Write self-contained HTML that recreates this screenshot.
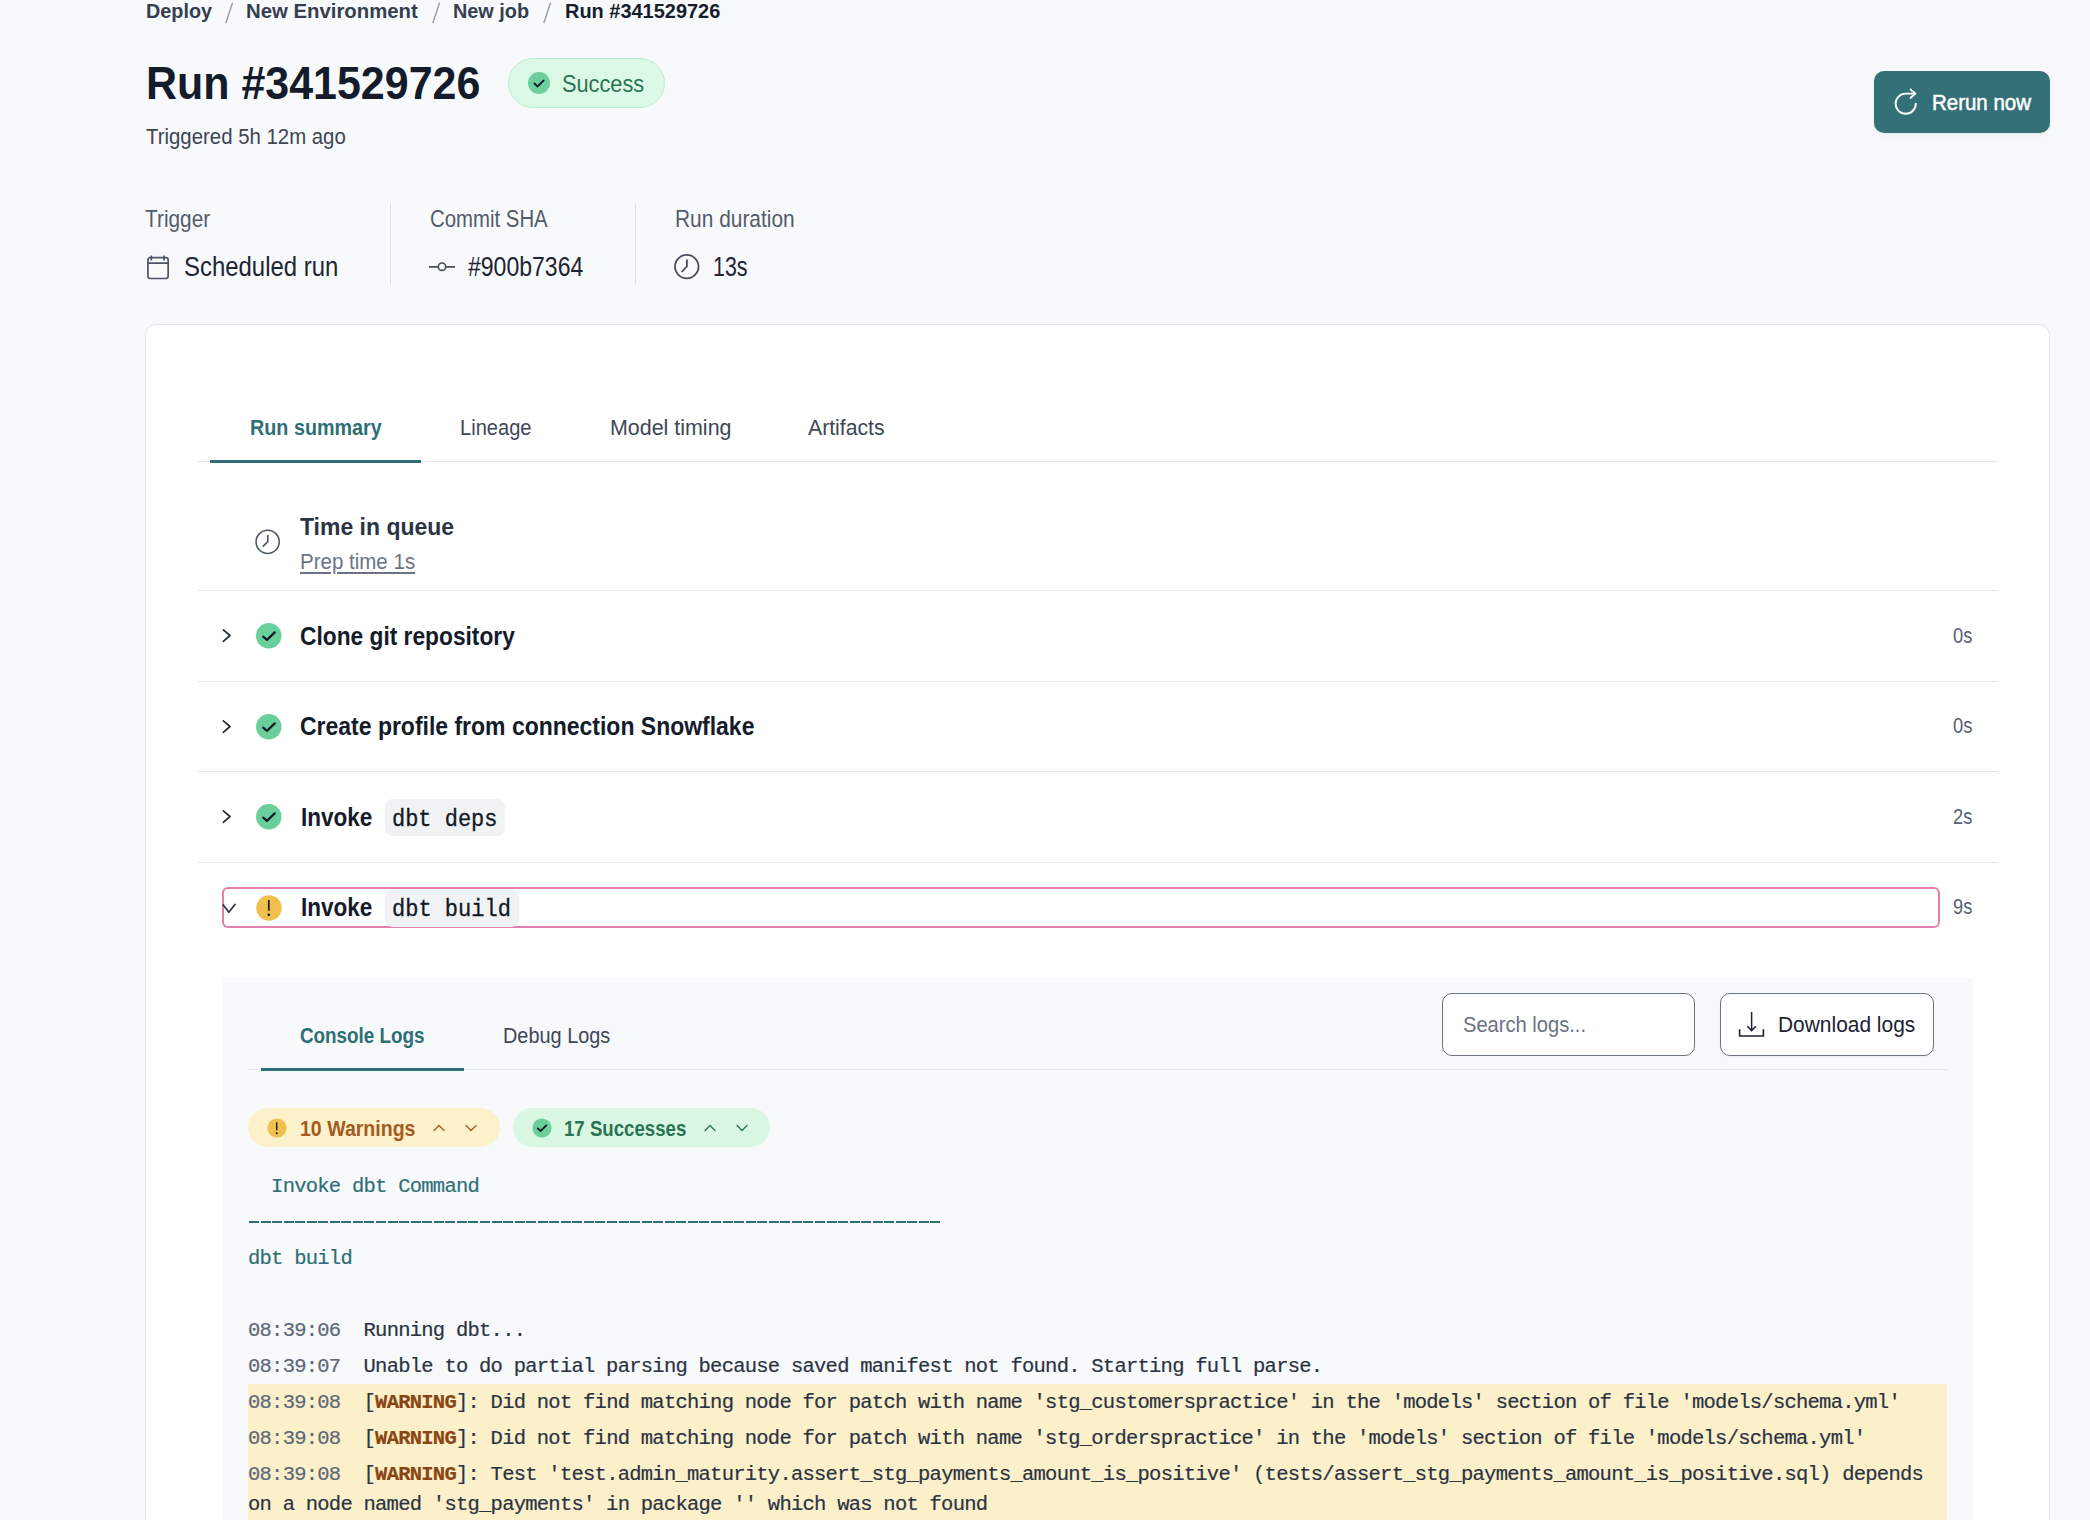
<!DOCTYPE html>
<html><head><meta charset="utf-8"><style>
html,body{margin:0;padding:0;}
body{width:2090px;height:1520px;overflow:hidden;position:relative;background:#f8f9fb;font-family:'Liberation Sans', sans-serif;}
.t{position:absolute;white-space:pre;}
.m{position:absolute;white-space:pre;-webkit-text-stroke-width:0.2px;font-family:'Liberation Mono', monospace;font-size:20.5px;line-height:20.5px;letter-spacing:-0.750px;}
.m b{font-weight:700;}
svg{overflow:visible}
</style></head><body>
<div class="t" style="left:145.7px;top:1.2px;font-size:20.79px;line-height:20.79px;letter-spacing:0.00px;font-family:'Liberation Sans', sans-serif;font-weight:700;color:#343e4f;transform:scaleX(0.9524);transform-origin:0 0;">Deploy</div>
<div class="t" style="left:246.2px;top:1.2px;font-size:20.79px;line-height:20.79px;letter-spacing:0.00px;font-family:'Liberation Sans', sans-serif;font-weight:700;color:#343e4f;transform:scaleX(0.9789);transform-origin:0 0;">New Environment</div>
<div class="t" style="left:452.9px;top:1.2px;font-size:20.79px;line-height:20.79px;letter-spacing:0.00px;font-family:'Liberation Sans', sans-serif;font-weight:700;color:#343e4f;transform:scaleX(0.9548);transform-origin:0 0;">New job</div>
<div class="t" style="left:564.7px;top:1.2px;font-size:20.79px;line-height:20.79px;letter-spacing:0.00px;font-family:'Liberation Sans', sans-serif;font-weight:700;color:#161d2c;transform:scaleX(0.9599);transform-origin:0 0;">Run #341529726</div>
<svg style="position:absolute;left:225.3px;top:2px;" width="10" height="22" viewBox="0 0 10 22"><path d="M7.4 1.3 L1 20.5" stroke="#9aa2ad" stroke-width="1.5" stroke-linecap="round"/></svg>
<svg style="position:absolute;left:431.5px;top:2px;" width="10" height="22" viewBox="0 0 10 22"><path d="M7.4 1.3 L1 20.5" stroke="#9aa2ad" stroke-width="1.5" stroke-linecap="round"/></svg>
<svg style="position:absolute;left:542.5px;top:2px;" width="10" height="22" viewBox="0 0 10 22"><path d="M7.4 1.3 L1 20.5" stroke="#9aa2ad" stroke-width="1.5" stroke-linecap="round"/></svg>
<div class="t" style="left:145.8px;top:59.8px;font-size:46.95px;line-height:46.95px;letter-spacing:0.00px;font-family:'Liberation Sans', sans-serif;font-weight:700;color:#141b2a;transform:scaleX(0.9151);transform-origin:0 0;">Run #341529726</div>
<div style="position:absolute;left:508px;top:58px;width:157px;height:50px;box-sizing:border-box;border:1.5px solid #b9efcf;background:#dcf8e6;border-radius:25px"></div>
<svg style="position:absolute;left:528px;top:72px;" width="22" height="22" viewBox="0 0 22 22"><circle cx="11" cy="11" r="11" fill="#6ccf9c"/><path d="M6.5 11.5 L9.6 14.4 L15.5 8.6" stroke="#161a2e" stroke-width="2" fill="none" stroke-linecap="round" stroke-linejoin="round"/></svg>
<div class="t" style="left:561.6px;top:71.8px;font-size:24.71px;line-height:24.71px;letter-spacing:0.00px;font-family:'Liberation Sans', sans-serif;font-weight:400;color:#2a7353;transform:scaleX(0.8801);transform-origin:0 0;">Success</div>
<div class="t" style="left:145.5px;top:125.8px;font-size:21.22px;line-height:21.22px;letter-spacing:0.00px;font-family:'Liberation Sans', sans-serif;font-weight:400;color:#3b4454;transform:scaleX(0.9605);transform-origin:0 0;">Triggered 5h 12m ago</div>
<div style="position:absolute;left:1874px;top:71px;width:176px;height:62px;background:#347077;border-radius:10px;box-shadow:0 2px 4px rgba(0,0,0,0.06)"></div>
<svg style="position:absolute;left:1893px;top:86px;" width="28" height="30" viewBox="0 0 28 30"><path d="M22.8 17.6 A10.1 10.1 0 1 1 12.7 7.6 H22.3" stroke="#fff" stroke-width="1.9" fill="none" stroke-linecap="round"/><path d="M17.6 3.5 L22.4 7.6 L17.6 11.8" stroke="#fff" stroke-width="1.9" fill="none" stroke-linecap="round" stroke-linejoin="round"/></svg>
<div class="t" style="left:1932.4px;top:91.8px;font-size:21.22px;line-height:21.22px;letter-spacing:0.00px;font-family:'Liberation Sans', sans-serif;font-weight:400;color:#ffffff;transform:scaleX(0.9639);transform-origin:0 0;-webkit-text-stroke:0.5px #ffffff">Rerun now</div>
<div class="t" style="left:145.0px;top:208.1px;font-size:23.26px;line-height:23.26px;letter-spacing:0.00px;font-family:'Liberation Sans', sans-serif;font-weight:400;color:#535c6a;transform:scaleX(0.8957);transform-origin:0 0;">Trigger</div>
<div class="t" style="left:429.7px;top:208.1px;font-size:23.26px;line-height:23.26px;letter-spacing:0.00px;font-family:'Liberation Sans', sans-serif;font-weight:400;color:#535c6a;transform:scaleX(0.8759);transform-origin:0 0;">Commit SHA</div>
<div class="t" style="left:674.8px;top:208.1px;font-size:23.26px;line-height:23.26px;letter-spacing:0.00px;font-family:'Liberation Sans', sans-serif;font-weight:400;color:#535c6a;transform:scaleX(0.8988);transform-origin:0 0;">Run duration</div>
<div style="position:absolute;left:389.5px;top:203px;width:1.5px;height:82px;background:#dfe2e6"></div>
<div style="position:absolute;left:634.5px;top:203px;width:1.5px;height:82px;background:#dfe2e6"></div>
<svg style="position:absolute;left:146px;top:255px;" width="24" height="25" viewBox="0 0 24 25"><rect x="1.95" y="2.7" width="20.2" height="20.8" rx="2.2" stroke="#4a5464" stroke-width="1.7" fill="none"/><path d="M1.95 8.2 H22.15 M5.3 0.6 V5.4 M18.1 0.6 V5.4" stroke="#4a5464" stroke-width="1.7"/></svg>
<div class="t" style="left:183.5px;top:253.8px;font-size:26.74px;line-height:26.74px;letter-spacing:0.00px;font-family:'Liberation Sans', sans-serif;font-weight:400;color:#1d2433;transform:scaleX(0.8949);transform-origin:0 0;">Scheduled run</div>
<svg style="position:absolute;left:428px;top:258px;" width="28" height="18" viewBox="0 0 28 18"><path d="M1 8.9 H10.3 M17.7 8.9 H27" stroke="#434d5c" stroke-width="1.8"/><circle cx="14" cy="8.7" r="3.7" stroke="#434d5c" stroke-width="1.6" fill="none"/></svg>
<div class="t" style="left:467.5px;top:253.8px;font-size:26.74px;line-height:26.74px;letter-spacing:0.00px;font-family:'Liberation Sans', sans-serif;font-weight:400;color:#1d2433;transform:scaleX(0.8616);transform-origin:0 0;">#900b7364</div>
<svg style="position:absolute;left:673px;top:254px;" width="27" height="27" viewBox="0 0 27 27"><circle cx="13.75" cy="12.6" r="11.75" stroke="#434d5c" stroke-width="1.8" fill="none"/><path d="M13.9 5.6 V12.4 L8.7 18" stroke="#434d5c" stroke-width="1.8" fill="none"/></svg>
<div class="t" style="left:713.3px;top:253.8px;font-size:26.74px;line-height:26.74px;letter-spacing:0.00px;font-family:'Liberation Sans', sans-serif;font-weight:400;color:#1d2433;transform:scaleX(0.8005);transform-origin:0 0;">13s</div>
<div style="position:absolute;left:145px;top:324px;width:1905px;height:1300px;box-sizing:border-box;background:#fff;border:1px solid #e2e4e8;border-radius:11px"></div>
<div style="position:absolute;left:197px;top:460.5px;width:1801px;height:1.5px;background:#e5e7eb"></div>
<div style="position:absolute;left:210px;top:460px;width:211px;height:3px;background:#2e6f76"></div>
<div class="t" style="left:249.6px;top:417.8px;font-size:21.37px;line-height:21.37px;letter-spacing:0.00px;font-family:'Liberation Sans', sans-serif;font-weight:700;color:#2e6f76;transform:scaleX(0.9250);transform-origin:0 0;">Run summary</div>
<div class="t" style="left:459.8px;top:417.4px;font-size:21.80px;line-height:21.80px;letter-spacing:0.00px;font-family:'Liberation Sans', sans-serif;font-weight:400;color:#3d4756;transform:scaleX(0.9214);transform-origin:0 0;">Lineage</div>
<div class="t" style="left:609.5px;top:417.4px;font-size:21.80px;line-height:21.80px;letter-spacing:0.00px;font-family:'Liberation Sans', sans-serif;font-weight:400;color:#3d4756;transform:scaleX(0.9830);transform-origin:0 0;">Model timing</div>
<div class="t" style="left:808.0px;top:417.4px;font-size:21.80px;line-height:21.80px;letter-spacing:0.00px;font-family:'Liberation Sans', sans-serif;font-weight:400;color:#3d4756;transform:scaleX(0.9733);transform-origin:0 0;">Artifacts</div>
<svg style="position:absolute;left:254px;top:528px;" width="27" height="27" viewBox="0 0 27 27"><circle cx="13.65" cy="13.85" r="11.6" stroke="#4d5766" stroke-width="1.6" fill="none"/><path d="M13.8 7 V13.6 L8.8 18.6" stroke="#4d5766" stroke-width="1.6" fill="none"/></svg>
<div class="t" style="left:300.0px;top:515.0px;font-size:24.71px;line-height:24.71px;letter-spacing:0.00px;font-family:'Liberation Sans', sans-serif;font-weight:700;color:#2b3444;transform:scaleX(0.9300);transform-origin:0 0;">Time in queue</div>
<div class="t" style="left:300.0px;top:551.1px;font-size:22.09px;line-height:22.09px;letter-spacing:0.00px;font-family:'Liberation Sans', sans-serif;font-weight:400;color:#6b7485;transform:scaleX(0.9291);transform-origin:0 0;text-decoration:underline;text-underline-offset:3px;text-decoration-thickness:1.5px">Prep time 1s</div>
<div style="position:absolute;left:197px;top:590px;width:1801px;height:1px;background:#e3e5ea"></div>
<div style="position:absolute;left:197px;top:681px;width:1801px;height:1px;background:#e3e5ea"></div>
<div style="position:absolute;left:197px;top:771px;width:1801px;height:1px;background:#e3e5ea"></div>
<div style="position:absolute;left:197px;top:862px;width:1801px;height:1px;background:#e3e5ea"></div>
<svg style="position:absolute;left:221px;top:628px;" width="12" height="16" viewBox="0 0 12 16"><path d="M2.3 1.9 L9.0 7.5 L2.3 13.3" stroke="#222a38" stroke-width="1.7" fill="none" stroke-linecap="round" stroke-linejoin="round"/></svg>
<svg style="position:absolute;left:256.05px;top:623.25px;" width="25.5" height="25.5" viewBox="0 0 25.5 25.5"><circle cx="12.75" cy="12.75" r="12.75" fill="#6acf9b"/><path d="M7.15 13.65 L10.95 16.85 L18.75 9.35" stroke="#131a28" stroke-width="2.2" fill="none" stroke-linecap="round" stroke-linejoin="round"/></svg>
<div class="t" style="left:300.2px;top:622.9px;font-size:26.16px;line-height:26.16px;letter-spacing:0.00px;font-family:'Liberation Sans', sans-serif;font-weight:700;color:#141b2a;transform:scaleX(0.8695);transform-origin:0 0;">Clone git repository</div>
<div class="t" style="left:1952.8px;top:625.7px;font-size:21.51px;line-height:21.51px;letter-spacing:0.00px;font-family:'Liberation Sans', sans-serif;font-weight:400;color:#586274;transform:scaleX(0.8502);transform-origin:0 0;">0s</div>
<svg style="position:absolute;left:221px;top:719px;" width="12" height="16" viewBox="0 0 12 16"><path d="M2.3 1.9 L9.0 7.5 L2.3 13.3" stroke="#222a38" stroke-width="1.7" fill="none" stroke-linecap="round" stroke-linejoin="round"/></svg>
<svg style="position:absolute;left:256.05px;top:714.25px;" width="25.5" height="25.5" viewBox="0 0 25.5 25.5"><circle cx="12.75" cy="12.75" r="12.75" fill="#6acf9b"/><path d="M7.15 13.65 L10.95 16.85 L18.75 9.35" stroke="#131a28" stroke-width="2.2" fill="none" stroke-linecap="round" stroke-linejoin="round"/></svg>
<div class="t" style="left:300.3px;top:713.6px;font-size:25.44px;line-height:25.44px;letter-spacing:0.00px;font-family:'Liberation Sans', sans-serif;font-weight:700;color:#141b2a;transform:scaleX(0.9031);transform-origin:0 0;">Create profile from connection Snowflake</div>
<div class="t" style="left:1952.8px;top:716.4px;font-size:21.51px;line-height:21.51px;letter-spacing:0.00px;font-family:'Liberation Sans', sans-serif;font-weight:400;color:#586274;transform:scaleX(0.8502);transform-origin:0 0;">0s</div>
<svg style="position:absolute;left:221px;top:809px;" width="12" height="16" viewBox="0 0 12 16"><path d="M2.3 1.9 L9.0 7.5 L2.3 13.3" stroke="#222a38" stroke-width="1.7" fill="none" stroke-linecap="round" stroke-linejoin="round"/></svg>
<svg style="position:absolute;left:256.05px;top:804.25px;" width="25.5" height="25.5" viewBox="0 0 25.5 25.5"><circle cx="12.75" cy="12.75" r="12.75" fill="#6acf9b"/><path d="M7.15 13.65 L10.95 16.85 L18.75 9.35" stroke="#131a28" stroke-width="2.2" fill="none" stroke-linecap="round" stroke-linejoin="round"/></svg>
<div class="t" style="left:300.8px;top:805.0px;font-size:25.00px;line-height:25.00px;letter-spacing:0.00px;font-family:'Liberation Sans', sans-serif;font-weight:700;color:#141b2a;transform:scaleX(0.9015);transform-origin:0 0;">Invoke</div>
<div style="position:absolute;left:385px;top:799px;width:120px;height:37px;background:#f1f2f4;border-radius:8px"></div>
<div class="t" style="left:392.0px;top:807.6px;font-size:24.29px;line-height:24.29px;letter-spacing:0.00px;font-family:'Liberation Mono', monospace;font-weight:400;color:#111826;transform:scaleX(0.9049);transform-origin:0 0;-webkit-text-stroke:0.3px #111826">dbt deps</div>
<div class="t" style="left:1952.8px;top:806.7px;font-size:21.51px;line-height:21.51px;letter-spacing:0.00px;font-family:'Liberation Sans', sans-serif;font-weight:400;color:#586274;transform:scaleX(0.8502);transform-origin:0 0;">2s</div>
<div style="position:absolute;left:222px;top:887px;width:1718px;height:41px;box-sizing:border-box;border:2.5px solid #e47eab;border-radius:6px"></div>
<svg style="position:absolute;left:221px;top:901.5px;" width="16" height="14" viewBox="0 0 16 14"><path d="M2.3 2.9 L7.8 10.3 L14.1 2.3" stroke="#2a3140" stroke-width="1.7" fill="none" stroke-linecap="round" stroke-linejoin="round"/></svg>
<svg style="position:absolute;left:256px;top:895px;" width="26" height="26" viewBox="0 0 26 26"><circle cx="13" cy="13" r="12.75" fill="#f0bf4c"/><path d="M12.8 5 V15.7" stroke="#161a26" stroke-width="1.7"/><circle cx="12.8" cy="19.8" r="1.35" fill="#161a26"/></svg>
<div class="t" style="left:300.8px;top:895.0px;font-size:25.00px;line-height:25.00px;letter-spacing:0.00px;font-family:'Liberation Sans', sans-serif;font-weight:700;color:#141b2a;transform:scaleX(0.9015);transform-origin:0 0;">Invoke</div>
<div style="position:absolute;left:385px;top:890px;width:134px;height:37px;background:#f1f2f4;border-radius:8px"></div>
<div class="t" style="left:392.0px;top:897.6px;font-size:24.29px;line-height:24.29px;letter-spacing:0.00px;font-family:'Liberation Mono', monospace;font-weight:400;color:#111826;transform:scaleX(0.9070);transform-origin:0 0;-webkit-text-stroke:0.3px #111826">dbt build</div>
<div class="t" style="left:1952.8px;top:897.0px;font-size:21.51px;line-height:21.51px;letter-spacing:0.00px;font-family:'Liberation Sans', sans-serif;font-weight:400;color:#586274;transform:scaleX(0.8502);transform-origin:0 0;">9s</div>
<div style="position:absolute;left:223px;top:978px;width:1750px;height:700px;background:#f8f9fb"></div>
<div style="position:absolute;left:248px;top:1068.5px;width:1699px;height:1.5px;background:#e3e6ea"></div>
<div style="position:absolute;left:261px;top:1067.5px;width:203px;height:3px;background:#2e6f76"></div>
<div class="t" style="left:300.3px;top:1025.2px;font-size:22.24px;line-height:22.24px;letter-spacing:0.00px;font-family:'Liberation Sans', sans-serif;font-weight:700;color:#2e6f76;transform:scaleX(0.8474);transform-origin:0 0;">Console Logs</div>
<div class="t" style="left:503.2px;top:1025.2px;font-size:22.24px;line-height:22.24px;letter-spacing:0.00px;font-family:'Liberation Sans', sans-serif;font-weight:400;color:#3d4756;transform:scaleX(0.8947);transform-origin:0 0;">Debug Logs</div>
<div style="position:absolute;left:1442px;top:993px;width:253px;height:63px;box-sizing:border-box;background:#fff;border:1.5px solid #6b7280;border-radius:10px"></div>
<div class="t" style="left:1462.7px;top:1013.6px;font-size:22.24px;line-height:22.24px;letter-spacing:0.00px;font-family:'Liberation Sans', sans-serif;font-weight:400;color:#6b7383;transform:scaleX(0.9049);transform-origin:0 0;">Search logs...</div>
<div style="position:absolute;left:1720px;top:993px;width:214px;height:63px;box-sizing:border-box;background:#fff;border:1.5px solid #6b7280;border-radius:10px;box-shadow:0 1px 2px rgba(0,0,0,0.05)"></div>
<svg style="position:absolute;left:1737px;top:1010px;" width="30" height="30" viewBox="0 0 30 30"><path d="M14.6 2 V20.6 M10.3 16.2 L14.6 20.6 L18.9 16.2" stroke="#1b2230" stroke-width="1.5" fill="none" stroke-linejoin="miter"/><path d="M2.6 19.2 V26 H26.4 V19.2" stroke="#1b2230" stroke-width="1.6" fill="none"/></svg>
<div class="t" style="left:1778.0px;top:1013.6px;font-size:22.24px;line-height:22.24px;letter-spacing:0.00px;font-family:'Liberation Sans', sans-serif;font-weight:400;color:#1b2230;transform:scaleX(0.9409);transform-origin:0 0;">Download logs</div>
<div style="position:absolute;left:248px;top:1108px;width:252px;height:39px;background:#fcf1ca;border-radius:20px"></div>
<svg style="position:absolute;left:267px;top:1118px;" width="20" height="20" viewBox="0 0 20 20"><circle cx="10" cy="10" r="9.6" fill="#f0bf4c"/><path d="M9.7 4.2 V12.2" stroke="#161a26" stroke-width="1.4"/><circle cx="9.7" cy="15.2" r="1.05" fill="#161a26"/></svg>
<div class="t" style="left:300.3px;top:1117.6px;font-size:21.66px;line-height:21.66px;letter-spacing:0.00px;font-family:'Liberation Sans', sans-serif;font-weight:700;color:#a55a1f;transform:scaleX(0.9025);transform-origin:0 0;">10 Warnings</div>
<svg style="position:absolute;left:431.5px;top:1122.5px;" width="14" height="10" viewBox="0 0 14 10"><path d="M2 7.5 L7 2.5 L12 7.5" stroke="#a55a1f" stroke-width="1.3" fill="none" stroke-linecap="round" stroke-linejoin="round"/></svg>
<svg style="position:absolute;left:464px;top:1123px;" width="14" height="10" viewBox="0 0 14 10"><path d="M2 2.5 L7 7.5 L12 2.5" stroke="#a55a1f" stroke-width="1.3" fill="none" stroke-linecap="round" stroke-linejoin="round"/></svg>
<div style="position:absolute;left:513px;top:1108px;width:257px;height:39px;background:#d9f7e2;border-radius:20px"></div>
<svg style="position:absolute;left:532px;top:1118px;" width="20" height="20" viewBox="0 0 20 20"><circle cx="10" cy="10" r="9.6" fill="#6acf9b"/><path d="M5.7 10.3 L8.6 13 L14.3 7.3" stroke="#131a28" stroke-width="1.8" fill="none" stroke-linecap="round" stroke-linejoin="round"/></svg>
<div class="t" style="left:564.4px;top:1117.6px;font-size:21.66px;line-height:21.66px;letter-spacing:0.00px;font-family:'Liberation Sans', sans-serif;font-weight:700;color:#2a7353;transform:scaleX(0.8603);transform-origin:0 0;">17 Successes</div>
<svg style="position:absolute;left:702.8px;top:1122.5px;" width="14" height="10" viewBox="0 0 14 10"><path d="M2 7.5 L7 2.5 L12 7.5" stroke="#2a7353" stroke-width="1.3" fill="none" stroke-linecap="round" stroke-linejoin="round"/></svg>
<svg style="position:absolute;left:734.7px;top:1123px;" width="14" height="10" viewBox="0 0 14 10"><path d="M2 2.5 L7 7.5 L12 2.5" stroke="#2a7353" stroke-width="1.3" fill="none" stroke-linecap="round" stroke-linejoin="round"/></svg>
<div class="m" style="left:248px;top:1176.9px;color:#2e6f76">  Invoke dbt Command</div>
<div style="position:absolute;left:249px;top:1220.5px;width:693px;height:2.5px;background:repeating-linear-gradient(90deg,#2e6f76 0,#2e6f76 10px,transparent 10px,transparent 11.55px)"></div>
<div class="m" style="left:248px;top:1248.6px;color:#2e6f76">dbt build</div>
<div style="position:absolute;left:248px;top:1384px;width:1699px;height:400px;background:#fcf0cb"></div>
<div class="m" style="left:248px;top:1320.6px;color:#2a3342"><span style="color:#5d6878">08:39:06</span>  Running dbt...</div>
<div class="m" style="left:248px;top:1356.9px;color:#2a3342"><span style="color:#5d6878">08:39:07</span>  Unable to do partial parsing because saved manifest not found. Starting full parse.</div>
<div class="m" style="left:248px;top:1392.9px;color:#2a3342"><span style="color:#5d6878">08:39:08</span>  [<b style="color:#8a4513">WARNING</b>]: Did not find matching node for patch with name 'stg_customerspractice' in the 'models' section of file 'models/schema.yml'</div>
<div class="m" style="left:248px;top:1428.6px;color:#2a3342"><span style="color:#5d6878">08:39:08</span>  [<b style="color:#8a4513">WARNING</b>]: Did not find matching node for patch with name 'stg_orderspractice' in the 'models' section of file 'models/schema.yml'</div>
<div class="m" style="left:248px;top:1464.6px;color:#2a3342"><span style="color:#5d6878">08:39:08</span>  [<b style="color:#8a4513">WARNING</b>]: Test 'test.admin_maturity.assert_stg_payments_amount_is_positive' (tests/assert_stg_payments_amount_is_positive.sql) depends</div>
<div class="m" style="left:248px;top:1495.4px;color:#2a3342">on a node named 'stg_payments' in package '' which was not found</div>
</body></html>
